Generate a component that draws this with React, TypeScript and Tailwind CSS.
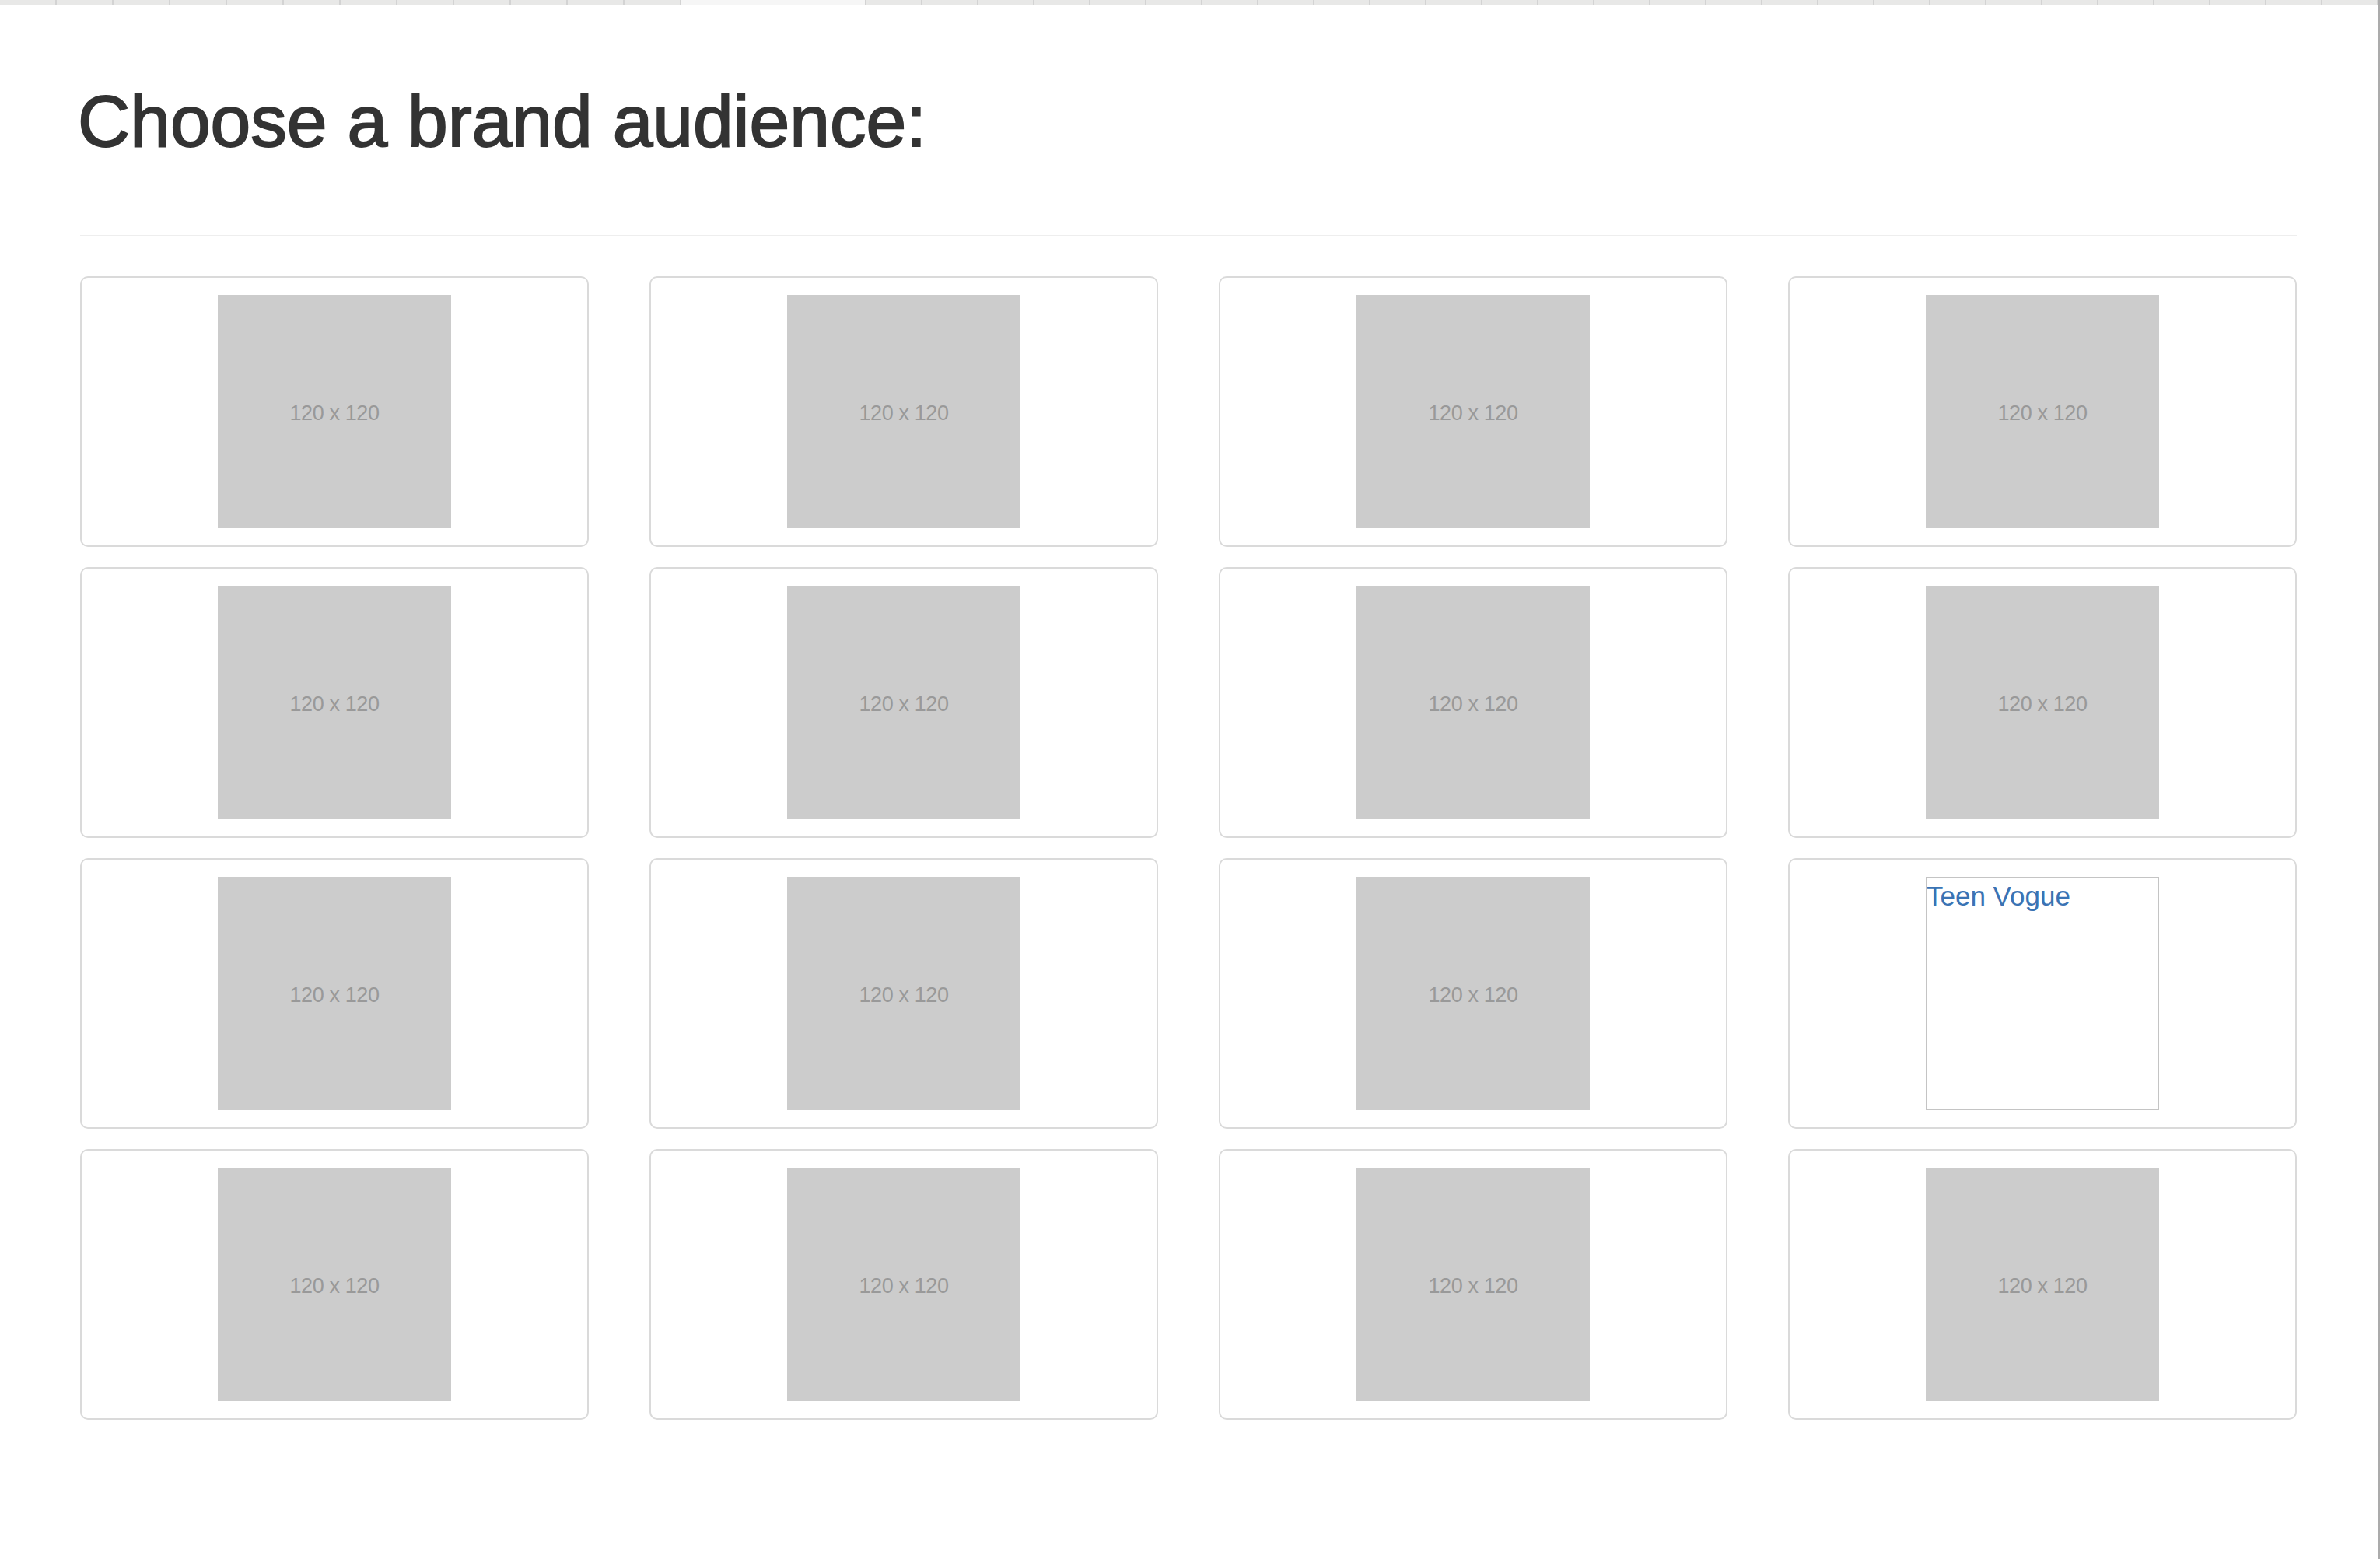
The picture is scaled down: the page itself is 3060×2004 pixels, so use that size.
const leftTabs = Array.from({ length: 12 }, (_, i) => i)
const rightTabs = Array.from({ length: 27 }, (_, i) => i)

const audiences = Array.from({ length: 16 }, (_, i) => ({
  id: i,
  name: i === 11 ? 'Teen Vogue' : null,
}))

function Placeholder() {
  return (
    <div className="flex h-[300px] w-[300px] items-center justify-center bg-[#cccccc] pt-[5px] text-[27px] tracking-[-0.4px] text-[#999999] font-['Liberation_Sans',Arial,sans-serif]">
      120 x 120
    </div>
  )
}

function BrokenImage({ alt }: { alt: string }) {
  return (
    <div className="h-[300px] w-[300px] border border-[#c4c4c4] bg-white">
      <span className="block pt-[2px] text-[35px] leading-[44px] text-[#3a73b4] font-['Liberation_Sans',Arial,sans-serif]">
        {alt}
      </span>
    </div>
  )
}

export default function App() {
  return (
    <div className="flex min-h-[2004px] w-[3060px] bg-white">
      <div className="flex-1 bg-white">
        {/* Tab strip */}
        <div className="flex h-[7px] border-b border-[#d8d8d8] bg-[#e8e8e7]">
          {leftTabs.map((t) => (
            <div key={t} className="h-full w-[73px] border-r-2 border-[#d3d3d3]" />
          ))}
          <div className="h-full w-[238px] border-r-2 border-[#d3d3d3] bg-[#f6f6f6]" />
          {rightTabs.map((t) => (
            <div key={t} className="h-full w-[72px] shrink-0 border-r-2 border-[#d3d3d3]" />
          ))}
        </div>

        <div className="pl-[103px] pt-[103px]">
          <h1 className="-ml-[3px] text-[93px] leading-none text-[#333333] font-['Liberation_Sans',Arial,sans-serif] [-webkit-text-stroke:2px_#333333]">
            Choose a brand audience:
          </h1>

          <div className="mt-[99px] h-[2px] w-[2850px] bg-[#eeeeee]" />

          {/* Audience grid */}
          <div className="mt-[51px] grid grid-cols-[repeat(4,654px)] gap-x-[78px] gap-y-[26px]">
            {audiences.map((a) => (
              <div
                key={a.id}
                className="flex h-[348px] items-center justify-center rounded-[10px] border-2 border-[#dadada] bg-white"
              >
                {a.name ? <BrokenImage alt={a.name} /> : <Placeholder />}
              </div>
            ))}
          </div>
        </div>
      </div>

      {/* window edge */}
      <div className="w-[3px] border-l-2 border-[#ababab] bg-[#b9c3cb]" />
    </div>
  )
}
